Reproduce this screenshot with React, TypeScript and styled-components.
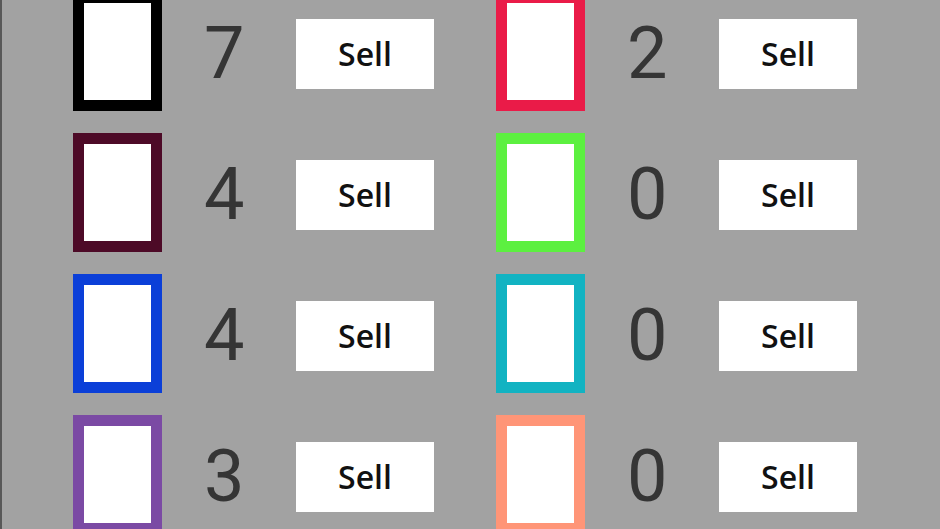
import styled, { createGlobalStyle } from 'styled-components';

type Stock = {
  color: string;
  count: number;
};

const left: Stock[] = [
  { color: '#000000', count: 7 },
  { color: '#4d0a27', count: 4 },
  { color: '#0b3fd8', count: 4 },
  { color: '#7b4aa4', count: 3 },
];

const right: Stock[] = [
  { color: '#ea1b48', count: 2 },
  { color: '#5cf040', count: 0 },
  { color: '#12b3c2', count: 0 },
  { color: '#ff9577', count: 0 },
];

const GlobalStyle = createGlobalStyle`
  html, body {
    margin: 0;
    padding: 0;
    background: #a2a2a2;
    overflow: hidden;
  }
`;

const App = () => {
  const renderColumn = (items: Stock[]) => (
    <Column>
      {items.map((item, index) => (
        <Row key={index}>
          <Card $color={item.color} />
          <Count>{item.count}</Count>
          <SellBtn>Sell</SellBtn>
        </Row>
      ))}
    </Column>
  );

  return (
    <>
      <GlobalStyle />
      <Wrap>
        <Grid>
          {renderColumn(left)}
          {renderColumn(right)}
        </Grid>
      </Wrap>
    </>
  );
};

const Wrap = styled.div`
  height: 529px;
  border-left: 2px solid #585858;
  box-sizing: border-box;
  overflow: hidden;
`;

const Grid = styled.div`
  display: grid;
  grid-template-columns: 361px 361px;
  column-gap: 62px;
  padding-left: 71px;
  margin-top: -8px;
`;

const Column = styled.div`
  display: flex;
  flex-direction: column;
  gap: 18px;
`;

const Row = styled.div`
  display: flex;
  align-items: center;
`;

const Card = styled.div<{ $color: string }>`
  width: 89px;
  height: 119px;
  box-sizing: border-box;
  border: 11px solid ${(p) => p.$color};
  background: #ffffff;
  margin-bottom: 4px;
  flex-shrink: 0;
`;

const Count = styled.div`
  width: 134px;
  box-sizing: border-box;
  padding-left: 42px;
  font-family: Roboto, 'Liberation Sans', sans-serif;
  font-size: 72px;
  line-height: 1;
  color: #353535;
`;

const SellBtn = styled.button`
  width: 138px;
  height: 70px;
  border: none;
  border-radius: 0;
  background: #ffffff;
  color: #111111;
  font-family: 'Open Sans', 'Noto Sans', sans-serif;
  font-weight: 600;
  font-size: 32px;
  padding: 0;
  cursor: pointer;
`;

export default App;
